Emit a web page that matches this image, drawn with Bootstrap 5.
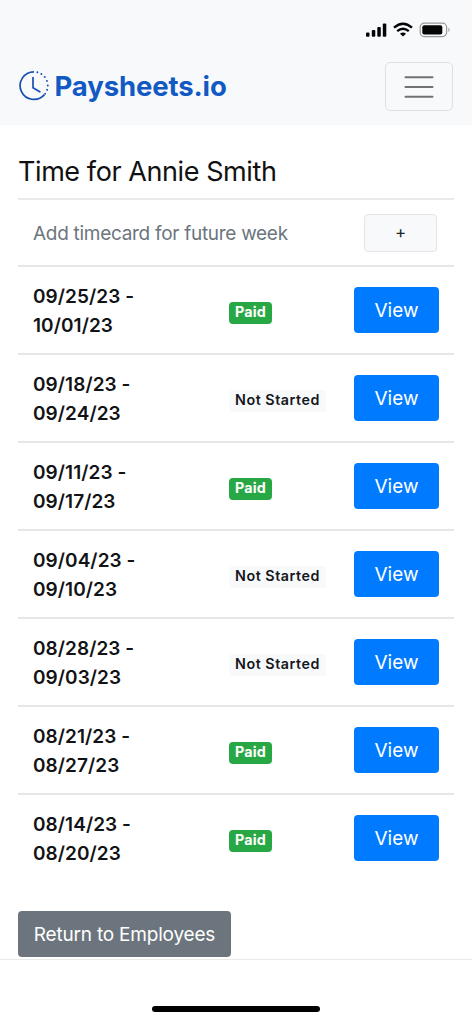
<!DOCTYPE html>
<html lang="en">
<head>
<meta charset="utf-8">
<meta name="viewport" content="width=device-width, initial-scale=1">
<title>Paysheets.io</title>
<link href="https://cdn.jsdelivr.net/npm/bootstrap@5.3.0/dist/css/bootstrap.min.css" rel="stylesheet">
<style>
body{font-family:Inter,"Liberation Sans",sans-serif;font-size:19px;line-height:29px;color:#111316;height:1022px;overflow:hidden;background:#fff}
.topbar{background:#f8f9fb;height:125px}
.status{height:60px;padding:21px 21px 0 0}
.brand-link{padding:6px 0 0 2px}
.brand-name{font-size:27.5px;font-weight:700;line-height:40px;letter-spacing:-.12px;color:#1259c3;margin-left:4.5px}
.menu-btn{width:68px;height:49px;border:1.5px solid #dfe0e3;border-radius:5px;background:transparent;margin:2px 3px 0 0}
.page{padding:0 18px}
.page-title{font-size:27px;font-weight:400;line-height:34px;letter-spacing:-.42px;padding-top:30px;margin:0;height:73px;color:#111}
.add-row{height:67px;border-top:2px solid #e8e9ea;padding:0 17px 0 15px}
.add-label{color:#6c757d;letter-spacing:-.29px;padding-top:1px}
.add-btn{width:73px;height:38px;background:#f8f9fb;border:1.5px solid #e2e4e8;border-radius:4px;font-size:17px;line-height:1;padding:0 0 1px}
.time-row{height:88px;border-top:2px solid #e5e6e7;padding:0 15px}
.dates{width:196px;font-weight:600;letter-spacing:.06px;padding-top:2px}
.state{height:22px;line-height:20px;padding:0 6px;font-size:14.3px;font-weight:600;letter-spacing:.54px;border-radius:4px;margin-top:5px}
.state-paid{background:#28a745;color:#fff;font-weight:700;letter-spacing:.15px}
.state-none{background:#f8f9fb;color:#16181b}
.view-btn{width:85px;height:46px;background:#007bff;border:0;border-radius:4px;color:#fff;font-size:19px;padding:3px 0 0}
.return-btn{width:213px;height:46px;background:#6c757d;border:0;border-radius:4px;color:#fff;font-size:19px;letter-spacing:-.2px;padding:3px 0 0;margin-top:30px}
.browser-foot{border-top:1.5px solid #e8e9ea;margin-top:2px;height:62px;padding-top:46px}
.home-bar{width:168px;height:6px;border-radius:3px;background:#000}
</style>
</head>
<body>
<header class="topbar">
  <div class="status d-flex justify-content-end align-items-start">
    <svg width="86" height="18" viewBox="0 0 86 18">
      <g fill="#050505"><rect x="1" y="11.4" width="3.5" height="4.4" rx="1"/><rect x="6.8" y="9" width="3.5" height="6.8" rx="1"/><rect x="12.3" y="6" width="3.5" height="9.8" rx="1"/><rect x="17.8" y="2.4" width="3.5" height="13.4" rx="1"/></g>
      <g fill="none" stroke="#050505" stroke-width="2.4"><path d="M29 6.6Q38 -1.2 47 6.6"/><path d="M32.2 10.2Q38 5.2 43.8 10.2"/></g>
      <path d="M35 12.7Q38 10.4 41 12.7L38 15.6Z" fill="#050505"/>
      <rect x="55.2" y="2.2" width="26.4" height="13.4" rx="4" fill="none" stroke="#999a9c" stroke-width="1.2"/>
      <rect x="57.3" y="4.3" width="20" height="9.2" rx="2" fill="#050505"/>
      <path d="M83.4 6.7q2.4 2.1 0 4.4z" fill="#999a9c"/>
    </svg>
  </div>
  <nav class="d-flex justify-content-between align-items-start ps-3 pe-3">
    <a class="brand-link d-flex align-items-center text-decoration-none" href="#">
      <svg width="32" height="32" viewBox="0 0 32 32" fill="none" stroke="#1750b0" stroke-width="1.7">
        <path d="M16 1.8A13.8 13.8 0 1 0 26.4 24.6"/>
        <path d="M15 7.6v10.2l6.8 4" stroke-linecap="round"/>
        <path d="M19.3 2.2A13.8 13.8 0 0 1 27 23.9" stroke-width="1.9" stroke-linecap="round" stroke-dasharray="0.1 4.35"/>
      </svg>
      <span class="brand-name">Paysheets.io</span>
    </a>
    <button class="menu-btn d-flex align-items-center justify-content-center" type="button" aria-label="Menu">
      <svg width="30" height="24" viewBox="0 0 30 24" stroke="#707173" stroke-width="2" stroke-linecap="round"><path d="M1.5 2.2h27M1.5 12h27M1.5 21.8h27"/></svg>
    </button>
  </nav>
</header>
<main class="page">
  <h1 class="page-title">Time for Annie Smith</h1>
  <div class="add-row d-flex align-items-center justify-content-between"><span class="add-label">Add timecard for future week</span><button class="btn add-btn" type="button">+</button></div>
  <div class="time-row d-flex align-items-center"><div class="dates">09/25/23 -<br>10/01/23</div><span class="state state-paid">Paid</span><button class="btn view-btn ms-auto" type="button">View</button></div>
  <div class="time-row d-flex align-items-center"><div class="dates">09/18/23 -<br>09/24/23</div><span class="state state-none">Not Started</span><button class="btn view-btn ms-auto" type="button">View</button></div>
  <div class="time-row d-flex align-items-center"><div class="dates">09/11/23 -<br>09/17/23</div><span class="state state-paid">Paid</span><button class="btn view-btn ms-auto" type="button">View</button></div>
  <div class="time-row d-flex align-items-center"><div class="dates">09/04/23 -<br>09/10/23</div><span class="state state-none">Not Started</span><button class="btn view-btn ms-auto" type="button">View</button></div>
  <div class="time-row d-flex align-items-center"><div class="dates">08/28/23 -<br>09/03/23</div><span class="state state-none">Not Started</span><button class="btn view-btn ms-auto" type="button">View</button></div>
  <div class="time-row d-flex align-items-center"><div class="dates">08/21/23 -<br>08/27/23</div><span class="state state-paid">Paid</span><button class="btn view-btn ms-auto" type="button">View</button></div>
  <div class="time-row d-flex align-items-center"><div class="dates">08/14/23 -<br>08/20/23</div><span class="state state-paid">Paid</span><button class="btn view-btn ms-auto" type="button">View</button></div>
  <button class="btn return-btn d-block" type="button">Return to Employees</button>
</main>
<footer class="browser-foot d-flex justify-content-center"><div class="home-bar"></div></footer>
<script src="https://cdn.jsdelivr.net/npm/bootstrap@5.3.0/dist/js/bootstrap.bundle.min.js"></script>
</body>
</html>
